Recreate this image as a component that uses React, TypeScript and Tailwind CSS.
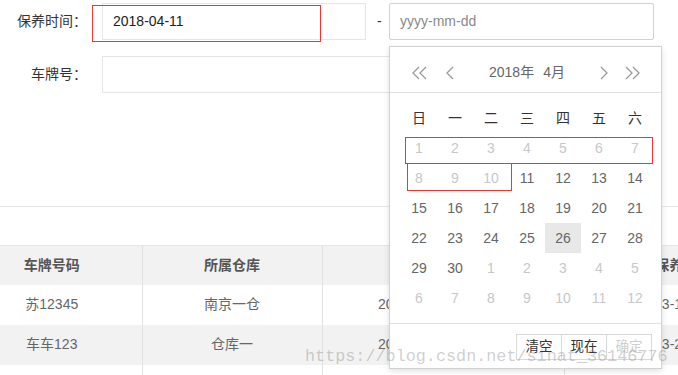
import React from "react";

const FONT = { fontFamily: '"Liberation Sans", "Noto Sans CJK SC", sans-serif' };

function Chevron({ dir, double }: { dir: "l" | "r"; double?: boolean }) {
  const w = double ? 16 : 8;
  const one = (x: number) =>
    dir === "l" ? `${x + 7},1 ${x + 1},7 ${x + 7},13` : `${x + 1},1 ${x + 7},7 ${x + 1},13`;
  return (
    <svg width={w} height={14} viewBox={`0 0 ${w} 14`} fill="none" stroke="#9a9a9a" strokeWidth={1.3}>
      <polyline points={one(0)} />
      {double && <polyline points={one(7)} />}
    </svg>
  );
}

const weeks = ["日", "一", "二", "三", "四", "五", "六"];

type Day = { n: number; off?: boolean; sel?: boolean };

const days: Day[] = [
  ...[1, 2, 3, 4, 5, 6, 7, 8, 9, 10].map((n) => ({ n, off: true })),
  ...Array.from({ length: 20 }, (_, i) => ({ n: i + 11, sel: i + 11 === 26 })),
  ...Array.from({ length: 12 }, (_, i) => ({ n: i + 1, off: true })),
];

function DatePicker() {
  return (
    <div className="absolute left-[389px] top-[46px] w-[273px] border border-[#d2d2d2] bg-white shadow-[0_2px_6px_rgba(0,0,0,0.12)]">
      <div className="flex h-[46px] items-center border-b border-[#e2e2e2] pl-[22px] pr-[20px] pt-[6px]">
        <Chevron dir="l" double />
        <div className="ml-[18px]">
          <Chevron dir="l" />
        </div>
        <div className="flex flex-1 justify-center gap-[9px] text-[14px] text-[#666]">
          <span>2018年</span>
          <span>4月</span>
        </div>
        <div className="mr-[17px]">
          <Chevron dir="r" />
        </div>
        <Chevron dir="r" double />
      </div>
      <div className="pl-[11px] pt-[10px] pb-[10px]">
        <div className="grid grid-cols-[repeat(7,36px)] text-[14px]">
          {weeks.map((w) => (
            <div key={w} className="flex h-[30px] items-center justify-center text-[#333]">
              {w}
            </div>
          ))}
          {days.map((d, i) => (
            <div
              key={i}
              className={`flex h-[30px] items-center justify-center ${
                d.off ? "text-[#c8c8c8]" : "text-[#666]"
              } ${d.sel ? "bg-[#e8e8e8]" : ""}`}
            >
              {d.n}
            </div>
          ))}
        </div>
      </div>
      <div className="flex justify-end border-t border-[#e2e2e2] pb-[8px] pr-[9px] pt-[10px]">
        {["清空", "现在", "确定"].map((b, i) => (
          <div
            key={b}
            className={`flex h-[26px] w-[46px] items-center justify-center border border-[#d8d8d8] text-[13.5px] ${
              i > 0 ? "-ml-px" : ""
            } ${i === 2 ? "text-[#cfcfcf]" : "text-[#333]"}`}
          >
            {b}
          </div>
        ))}
      </div>
    </div>
  );
}

const rows = [
  { a: "苏12345", b: "南京一仓", c: "2018-03-15 12:00:00", d: "2018-03-12 09:30:00" },
  { a: "车车123", b: "仓库一", c: "2018-03-20 10:00:00", d: "2018-03-22 14:00:00" },
  { a: "", b: "", c: "", d: "" },
];

export default function App() {
  return (
    <div className="relative h-[375px] w-[678px] overflow-hidden bg-white text-[14px] text-[#333]" style={FONT}>
      <div className="pt-[3px]">
        <div className="flex h-[37px] items-center">
          <label className="w-[102px] pr-[15px] text-right">保养时间：</label>
          <div className="flex h-[37px] w-[264px] items-center border border-[#e6e6e6] pl-[10px] text-[#222]">
            2018-04-11
          </div>
          <span className="ml-[11px] w-[12px]">-</span>
          <div className="flex h-[37px] w-[265px] items-center rounded-[2px] border border-[#d2d2d2] pl-[10px] text-[#8a8a8a]">
            yyyy-mm-dd
          </div>
        </div>
        <div className="mt-[16px] flex h-[37px] items-center">
          <label className="w-[102px] pr-[15px] text-right">车牌号：</label>
          <div className="h-[37px] w-[552px] border border-[#e6e6e6]" />
        </div>
      </div>

      <div className="mt-[113px] border-t border-[#e6e6e6]" />

      <table className="-ml-[38px] mt-[38px] w-[840px] table-fixed border-collapse border-t border-[#e6e6e6] text-[#666]">
        <colgroup>
          <col className="w-[180px]" />
          <col className="w-[180px]" />
          <col className="w-[242px]" />
          <col className="w-[238px]" />
        </colgroup>
        <thead>
          <tr className="h-[39px] bg-[#f2f2f2] font-bold text-[#555]">
            <th className="border-r border-[#e2e2e2]">车牌号码</th>
            <th className="border-r border-[#e2e2e2]">所属仓库</th>
            <th className="border-r border-[#e2e2e2]">入库时间</th>
            <th>保养时间</th>
          </tr>
        </thead>
        <tbody>
          {rows.map((r, i) => (
            <tr key={i} className={`h-[40px] ${i % 2 === 1 ? "bg-[#f2f2f2]" : "bg-white"}`}>
              <td className="border-r border-[#e2e2e2] text-center">{r.a}</td>
              <td className="border-r border-[#e2e2e2] text-center">{r.b}</td>
              <td className="border-r border-[#e2e2e2] text-center">{r.c}</td>
              <td className="text-center">{r.d}</td>
            </tr>
          ))}
        </tbody>
      </table>

      <DatePicker />

      <div className="pointer-events-none absolute left-[92px] top-[5px] h-[37px] w-[229px] border border-[#e53935]" />
      <div className="pointer-events-none absolute left-[405px] top-[137px] h-[27px] w-[248px] border border-[#e53935]" />
      <div className="pointer-events-none absolute left-[407px] top-[163px] h-[28px] w-[105px] border border-t-0 border-[#e53935]" />

      <div
        className="pointer-events-none absolute left-[305px] top-[344px] whitespace-nowrap text-[16.8px] text-[rgba(140,140,140,0.42)]"
        style={{ fontFamily: '"Liberation Mono", monospace' }}
      >
        https://blog.csdn.net/sinat_36146776
      </div>
    </div>
  );
}
